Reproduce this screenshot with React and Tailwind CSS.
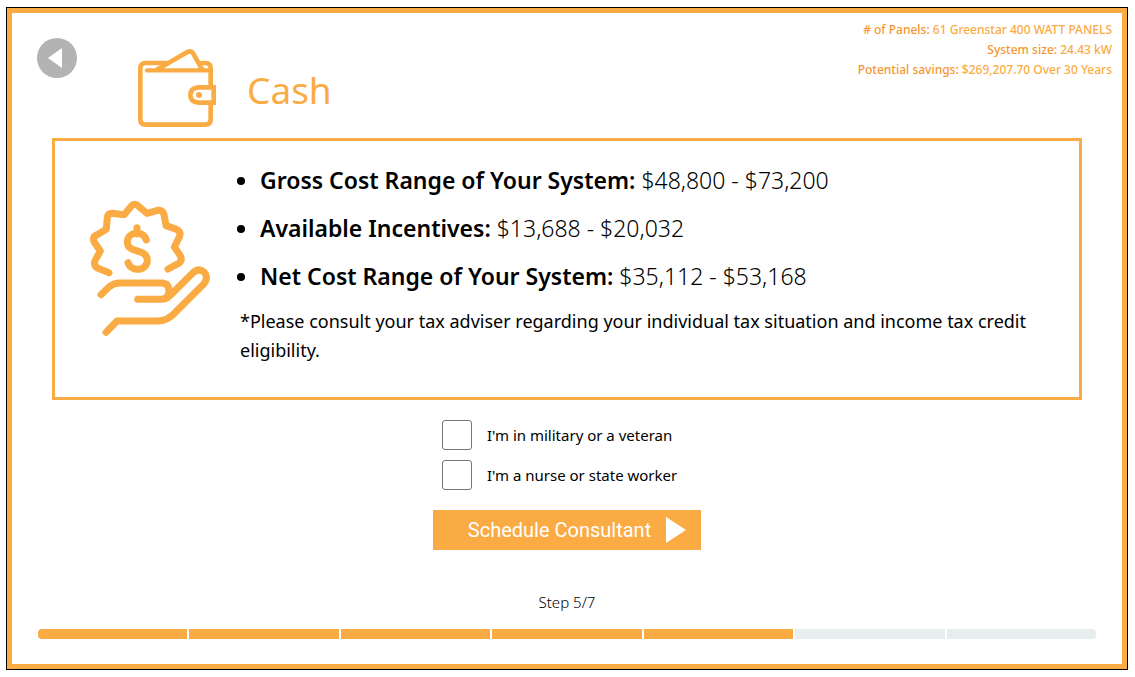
const COSTS = [
  { label: 'Gross Cost Range of Your System:', value: '$48,800 - $73,200' },
  { label: 'Available Incentives:', value: '$13,688 - $20,032' },
  { label: 'Net Cost Range of Your System:', value: '$35,112 - $53,168' },
];

const STATS = [
  { label: '# of Panels:', value: '61 Greenstar 400 WATT PANELS' },
  { label: 'System size:', value: '24.43 kW' },
  { label: 'Potential savings:', value: '$269,207.70 Over 30 Years' },
];

const OPTIONS = [
  { id: 'military', label: "I'm in military or a veteran" },
  { id: 'nurse', label: "I'm a nurse or state worker" },
];

const STEPS = 7;
const CURRENT = 5;

function WalletIcon() {
  return (
    <svg aria-hidden="true" viewBox="36 24 240 240" className="size-20 shrink-0" fill="none" stroke="#fbab43" strokeWidth="14" strokeLinecap="round" strokeLinejoin="round">
      <path d="M128 69H62Q46 69 46 85V238Q46 254 62 254H241Q257 254 257 238V190M257 140V85Q257 69 241 69H230" />
      <path d="M66 91H254" strokeWidth="13" />
      <path d="M98 88L186 37Q198 30 205 41L231 88" />
      <path d="M266 142H220Q196 144 196 165T220 188H266Z" strokeLinejoin="miter" />
      <circle cx="222" cy="165" r="9" fill="#fbab43" stroke="none" />
    </svg>
  );
}

function IncentiveIcon() {
  return (
    <svg aria-hidden="true" viewBox="57 60 366 408" className="h-[136px] w-[122px] shrink-0" fill="none" stroke="#fbab43" strokeWidth="21" strokeLinecap="round" strokeLinejoin="round">
      <path d="M117 278L84 265Q70 258 75 242L91 213L72 185Q67 171 80 165L109 148L112 112Q114 100 126 100L163 104L183 79Q194 66 206 79L231 100L263 91Q278 89 282 103L288 137L320 148Q333 154 329 169L313 201L331 227Q338 242 326 250L294 267" />
      <path d="M201 143V162M229 180Q222 160 201 160C181 160 172 174 172 187C172 204 188 210 202 213C219 217 232 225 232 241C232 257 219 268 203 268Q181 267 174 248" />
      <path d="M93 344L116 322Q130 309 151 309H275Q297 310 297 333Q296 357 275 358H203M284 357Q293 354 301 346L366 281Q384 262 402 276Q417 292 402 311L316 397Q293 423 262 423H141L108 457" />
    </svg>
  );
}

export default function App() {
  return (
    <div className="flex min-h-screen bg-white pt-[7px] pr-[7px] pb-[7px] pl-[6px] font-['Noto_Sans','Open_Sans',sans-serif] text-black">
      <div className="flex flex-1 border border-black">
        <main className="flex-1 border-5 border-[#fbab43]">
          <header className="flex h-[125px] items-start pr-[10px] pl-[25px]">
            <button type="button" aria-label="Back" className="mt-[25px] flex size-10 shrink-0 items-center justify-center rounded-full bg-[#b3b3b3]">
              <svg aria-hidden="true" viewBox="0 0 40 40" className="size-10" fill="#fff">
                <path d="M11 20L25 10V30Z" />
              </svg>
            </button>
            <div className="mt-[35px] ml-[60px] flex items-center gap-[30px]">
              <WalletIcon />
              <h1 className="pt-[3px] text-[37px] leading-[50px] font-normal text-[#fbab43]">Cash</h1>
            </div>
            <dl className="mt-[7px] ml-auto text-right text-[12px] leading-[20px] font-medium">
              {STATS.map((s) => (
                <div key={s.label}>
                  <dt className="inline text-[#f7962f]">{s.label}</dt>{' '}
                  <dd className="inline text-[#fbab43]">{s.value}</dd>
                </div>
              ))}
            </dl>
          </header>

          <section className="mx-10 flex h-[262px] items-start border-3 border-[#fbab43] pr-[30px] pl-[34px]">
            <div className="pt-[59px]">
              <IncentiveIcon />
            </div>
            <div className="ml-[29px] flex-1 pt-[15px]">
              <ul className="list-disc pl-5 text-[23px] leading-[48px]">
                {COSTS.map((c) => (
                  <li key={c.label}>
                    <strong className="font-semibold">{c.label}</strong> <span className="font-light">{c.value}</span>
                  </li>
                ))}
              </ul>
              <p className="mt-[7px] text-[18px] leading-[29px]">
                *Please consult your tax adviser regarding your individual tax situation and income tax credit eligibility.
              </p>
            </div>
          </section>

          <form className="flex flex-col items-center" onSubmit={(e) => e.preventDefault()}>
            <div className="mt-5 flex w-[250px] flex-col gap-[10px]">
              {OPTIONS.map((o) => (
                <div key={o.id} className="flex items-center gap-[15px]">
                  <input id={o.id} type="checkbox" className="size-[30px] shrink-0 appearance-none rounded-[3px] border border-[#767676] bg-white checked:bg-[#fbab43]" />
                  <label htmlFor={o.id} className="text-[15px] leading-[30px] whitespace-nowrap">{o.label}</label>
                </div>
              ))}
            </div>
            <button type="submit" className="mt-5 flex h-10 items-center gap-[15px] bg-[#fbab43] pr-[15px] pl-[35px] font-[Roboto,sans-serif] text-[20px] text-white">
              Schedule Consultant
              <svg aria-hidden="true" viewBox="0 0 20 26" className="h-[26px] w-5" fill="#fff">
                <path d="M0 0L20 13L0 26Z" />
              </svg>
            </button>
          </form>

          <footer className="mt-10 px-[26px]">
            <p className="text-center text-[15px] leading-[24px] font-light">Step {CURRENT}/{STEPS}</p>
            <div role="progressbar" aria-label="Step" aria-valuemin="1" aria-valuemax={STEPS} aria-valuenow={CURRENT} className="mt-[15px] flex h-[10px] gap-[2px] overflow-hidden rounded-[4px]">
              {Array.from({ length: STEPS }, (_, i) => (
                <span key={i} className={i < CURRENT ? 'flex-1 bg-[#fbab43]' : 'flex-1 bg-[#e6eef0]'} />
              ))}
            </div>
          </footer>
        </main>
      </div>
    </div>
  );
}
